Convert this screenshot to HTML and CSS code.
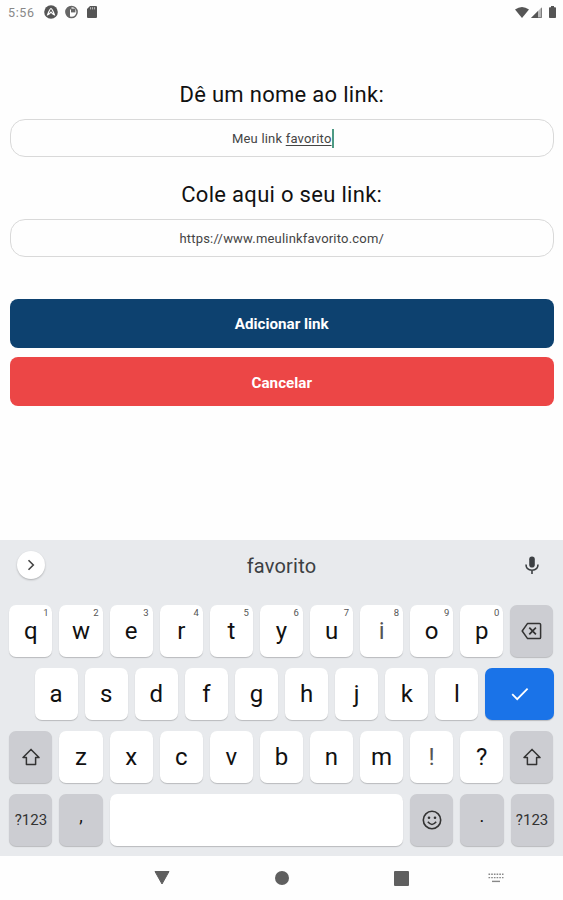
FILE: index.html
```html
<!DOCTYPE html>
<html lang="pt-BR">
<head>
    <meta charset="UTF-8">
    <meta name="viewport" content="width=device-width, initial-scale=1.0">
    <title>Adicionar link</title>
    <link rel="stylesheet" href="styles.css">
</head>
<body>

<header class="status-bar">
    <span class="clock">5:56</span>
    <svg class="status-icon" width="14" height="14" viewBox="0 0 14 14">
        <circle cx="7" cy="7" r="6.8" fill="#555"/>
        <path d="M3.6 9.8 Q5.8 3.6 7 3.6 Q8.2 3.6 10.4 9.8 Q9 9.6 7 7.2 Q5 9.6 3.6 9.8Z" fill="none" stroke="#fff" stroke-width="1.2"/>
    </svg>
    <svg class="status-icon" width="13" height="14" viewBox="0 0 13 14">
        <circle cx="6.5" cy="7" r="5.6" fill="#fff" stroke="#666" stroke-width="1.5"/>
        <path d="M6.5 1.4 A5.6 5.6 0 0 0 5 12.4 V4.5 H6.5Z" fill="#666"/>
        <path d="M6 3.6 H10.4 V7.4 H6Z" fill="#666"/>
    </svg>
    <svg class="status-icon" width="10" height="12" viewBox="0 0 10 12">
        <path d="M3 0 H9 Q10 0 10 1 V11 Q10 12 9 12 H1 Q0 12 0 11 V3Z" fill="#555"/>
        <path d="M3.6 1.2 V3.4 M5.6 1.2 V3.4 M7.6 1.2 V3.4" stroke="#ccc" stroke-width="0.9"/>
    </svg>
    <div class="status-right">
        <svg width="14" height="11" viewBox="0 0 14 11"><path d="M0 2.6 Q7 -2.4 14 2.6 L7 11Z" fill="#555"/></svg>
        <svg width="11" height="11" viewBox="0 0 11 11">
            <path d="M11 0 V11 H0Z" fill="#bbb"/>
            <path d="M7 4 V11 H0Z" fill="#555"/>
            <path d="M10.4 1.2 V10.6 H7" fill="none" stroke="#777" stroke-width="1"/>
        </svg>
        <svg class="battery" width="7" height="12" viewBox="0 0 7 12"><path d="M2 0 H5 V1.2 H6.2 Q7 1.2 7 2 V11.2 Q7 12 6.2 12 H0.8 Q0 12 0 11.2 V2 Q0 1.2 0.8 1.2 H2Z" fill="#555"/></svg>
    </div>
</header>

<main class="form">
    <h1 class="label">Dê um nome ao link:</h1>
    <div class="field field-name">Meu link&nbsp;<u>favorito</u><span class="caret"></span></div>

    <h1 class="label label-second">Cole aqui o seu link:</h1>
    <div class="field field-url">https://www.meulinkfavorito.com/</div>

    <button class="btn btn-add">Adicionar link</button>
    <button class="btn btn-cancel">Cancelar</button>
</main>

<section class="keyboard">
    <div class="suggestions">
        <span class="expand">
            <svg width="8" height="12" viewBox="0 0 8 12"><path d="M1.5 1.2 L6.3 6 L1.5 10.8" fill="none" stroke="#444" stroke-width="1.6"/></svg>
        </span>
        <span class="suggestion">favorito</span>
        <span class="mic">
            <svg width="14" height="19" viewBox="0 0 14 19">
                <rect x="4.2" y="0.5" width="5.6" height="11" rx="2.8" fill="#3c4043"/>
                <path d="M1 8.6 Q1 14.2 7 14.2 Q13 14.2 13 8.6 M7 14.2 V18" fill="none" stroke="#3c4043" stroke-width="1.6"/>
            </svg>
        </span>
    </div>

    <!-- First row -->
    <div class="row">
        <div class="key">q<sup>1</sup></div>
        <div class="key">w<sup>2</sup></div>
        <div class="key">e<sup>3</sup></div>
        <div class="key">r<sup>4</sup></div>
        <div class="key">t<sup>5</sup></div>
        <div class="key">y<sup>6</sup></div>
        <div class="key">u<sup>7</sup></div>
        <div class="key key-thin">i<sup>8</sup></div>
        <div class="key">o<sup>9</sup></div>
        <div class="key">p<sup>0</sup></div>
        <div class="key key-dark">
            <svg width="21" height="18" viewBox="0 0 21 18">
                <path d="M6.6 1.4 H18.4 Q19.6 1.4 19.6 2.6 V15.4 Q19.6 16.6 18.4 16.6 H6.6 L1.2 9Z" fill="none" stroke="#333" stroke-width="1.5" stroke-linejoin="round"/>
                <path d="M8.3 5.7 L14.9 12.3 M14.9 5.7 L8.3 12.3" stroke="#333" stroke-width="1.7"/>
            </svg>
        </div>
    </div>

    <!-- Second row -->
    <div class="row row-indent">
        <div class="key">a</div>
        <div class="key">s</div>
        <div class="key">d</div>
        <div class="key">f</div>
        <div class="key">g</div>
        <div class="key">h</div>
        <div class="key">j</div>
        <div class="key">k</div>
        <div class="key">l</div>
        <div class="key key-enter">
            <svg width="18" height="14" viewBox="0 0 18 14"><path d="M1.2 7.2 L6.2 12.2 L16.6 1.6" fill="none" stroke="#fff" stroke-width="1.8"/></svg>
        </div>
    </div>

    <!-- Third row -->
    <div class="row">
        <div class="key key-dark">
            <svg width="20" height="18" viewBox="0 0 20 18"><path d="M10 1.4 L18 9.6 H14.6 V16.6 H5.4 V9.6 H2Z" fill="none" stroke="#333" stroke-width="1.5" stroke-linejoin="round"/></svg>
        </div>
        <div class="key">z</div>
        <div class="key">x</div>
        <div class="key">c</div>
        <div class="key">v</div>
        <div class="key">b</div>
        <div class="key">n</div>
        <div class="key">m</div>
        <div class="key key-thin">!</div>
        <div class="key">?</div>
        <div class="key key-dark">
            <svg width="20" height="18" viewBox="0 0 20 18"><path d="M10 1.4 L18 9.6 H14.6 V16.6 H5.4 V9.6 H2Z" fill="none" stroke="#333" stroke-width="1.5" stroke-linejoin="round"/></svg>
        </div>
    </div>

    <!-- Bottom row -->
    <div class="row">
        <div class="key key-dark key-symbols">?123</div>
        <div class="key key-dark key-punct">,</div>
        <div class="key key-space"></div>
        <div class="key key-dark">
            <svg width="20" height="20" viewBox="0 0 20 20">
                <circle cx="10" cy="10" r="8.7" fill="none" stroke="#333" stroke-width="1.6"/>
                <circle cx="7" cy="7.8" r="1.3" fill="#333"/>
                <circle cx="13" cy="7.8" r="1.3" fill="#333"/>
                <path d="M5.8 11.8 Q10 17 14.2 11.8" fill="none" stroke="#333" stroke-width="1.5"/>
            </svg>
        </div>
        <div class="key key-dark key-punct">.</div>
        <div class="key key-dark key-symbols">?123</div>
    </div>
</section>

<nav class="nav-bar">
    <svg width="16" height="14" viewBox="0 0 16 14"><path d="M1 0.5 H15 L8 13Z" fill="#5f5f5f" stroke="#5f5f5f" stroke-linejoin="round"/></svg>
    <svg width="14" height="14" viewBox="0 0 14 14"><circle cx="7" cy="7" r="7" fill="#5f5f5f"/></svg>
    <svg width="15" height="15" viewBox="0 0 15 15"><rect width="15" height="15" rx="1" fill="#5f5f5f"/></svg>
    <svg width="16" height="10" viewBox="0 0 16 10">
        <path d="M0.5 1.2 H15.5 M0.5 4.6 H15.5" stroke="#888" stroke-width="1.4" stroke-dasharray="1.6 1.1"/>
        <path d="M4 8.4 H12" stroke="#888" stroke-width="1.4"/>
    </svg>
</nav>

</body>
</html>
```
FILE: styles.css
```css
* {
    box-sizing: border-box;
}

body {
    font-family: Roboto, sans-serif;
    margin: 0;
    height: 900px;
    display: flex;
    flex-direction: column;
    background-color: #fefefe;
    color: #111;
    overflow: hidden;
}

svg {
    display: block;
    flex: none;
}

/* Android status bar */
.status-bar {
    display: flex;
    align-items: center;
    height: 24px;
    padding: 0 7px 0 8px;
}

.clock {
    width: 36px;
    font-size: 12.5px;
    letter-spacing: 0.6px;
    color: #888;
}

.status-icon {
    margin-right: 7px;
}

.status-icon + .status-icon + .status-icon {
    margin-left: 2px;
}

.status-right {
    display: flex;
    align-items: center;
    gap: 2px;
    margin-left: auto;
}

.battery {
    margin-left: 5px;
}

/* Form */
.form {
    display: flex;
    flex-direction: column;
    height: 516px;
    padding: 56px 9px 0 9.5px;
}

.label {
    margin: 0;
    height: 39px;
    line-height: 30px;
    font-size: 22px;
    font-weight: 400;
    letter-spacing: 0.3px;
    text-align: center;
}

.label-second {
    margin-top: 23px;
}

.field {
    display: flex;
    align-items: center;
    justify-content: center;
    height: 38px;
    border: 1px solid #d9d9d9;
    border-radius: 15px;
    font-size: 13px;
    letter-spacing: 0.2px;
    color: #444;
}

.field u {
    text-underline-offset: 2px;
}

.caret {
    width: 2px;
    height: 19px;
    margin-right: -2px;
    background-color: #4d9a84;
}

.btn {
    height: 49px;
    margin-top: 9px;
    border: none;
    border-radius: 8px;
    font-family: inherit;
    font-size: 15.2px;
    font-weight: 700;
    color: #fff;
}

.btn-add {
    margin-top: 42px;
    background-color: #0d416f;
}

.btn-cancel {
    padding-top: 3px;
    background-color: #ec4646;
}

/* Keyboard */
.keyboard {
    height: 316px;
    padding: 0 9.4px;
    background-color: #e8eaed;
}

.suggestions {
    display: grid;
    grid-template-columns: 43px 1fr 43px;
    align-items: center;
    justify-items: center;
    height: 50px;
    margin-bottom: 14.5px;
}

.expand {
    display: flex;
    align-items: center;
    justify-content: center;
    width: 28px;
    height: 28px;
    border-radius: 50%;
    background-color: #fff;
    box-shadow: 0 1px 2px rgba(0, 0, 0, 0.25);
}

.suggestion {
    padding-top: 2px;
    font-size: 20px;
    letter-spacing: 0.2px;
    color: #3c4043;
}

.row {
    display: flex;
    gap: 7px;
    height: 52px;
    margin-bottom: 11.3px;
}

.row-indent {
    padding-left: 25.2px;
}

.key {
    position: relative;
    display: flex;
    align-items: center;
    justify-content: center;
    flex: none;
    width: 43.1px;
    border-radius: 7px;
    background-color: #fff;
    box-shadow: 0 1px 1px rgba(0, 0, 0, 0.2);
    font-size: 24px;
}

/* Number hint in the key corner */
.key sup {
    position: absolute;
    top: 2px;
    right: 4px;
    font-size: 9.5px;
    line-height: 12px;
    color: #555;
}

.key-dark {
    background-color: #cccdd2;
}

.key-enter {
    flex: 1;
    background-color: #1a73e8;
}

.key-space {
    flex: 1;
}

.key-thin {
    color: #555;
}

.key-symbols {
    font-size: 15px;
    color: #333;
}

.key-punct {
    padding-bottom: 9px;
    font-size: 18px;
}

/* Navigation bar */
.nav-bar {
    display: grid;
    grid-template-columns: 120px 119px 121px 68px;
    align-items: center;
    justify-items: center;
    height: 44px;
    padding-left: 102px;
}
```
